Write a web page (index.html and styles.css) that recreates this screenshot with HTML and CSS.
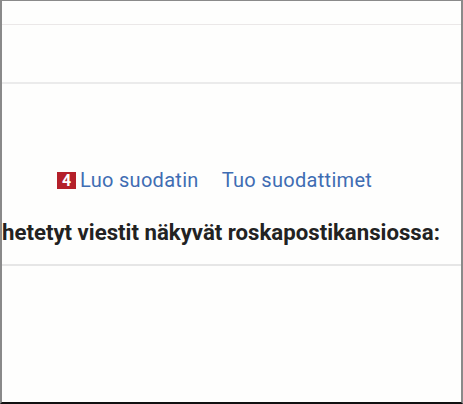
FILE: index.html
```html
<!DOCTYPE html>
<html lang="fi">
<head>
<meta charset="utf-8">
<link rel="stylesheet" href="styles.css">
</head>
<body>
<div class="frame">
  <div class="band band-top"></div>
  <div class="band band-mid"></div>
  <div class="content">
    <div class="actions">
      <span class="badge">4</span>
      <a class="link">Luo suodatin</a>
      <a class="link second">Tuo suodattimet</a>
    </div>
    <p class="note">hetetyt viestit näkyvät roskapostikansiossa:</p>
    <div class="rule"></div>
  </div>
</div>
</body>
</html>
```
FILE: styles.css
```css
html, body {
  margin: 0;
  padding: 0;
  background: #fefefd;
}
.frame {
  width: 463px;
  height: 404px;
  box-sizing: border-box;
  border-left: 2px solid #8a8a8a;
  border-right: 2px solid #8a8a8a;
  border-top: 1px solid #8a8a8a;
  border-bottom: 2px solid #111;
  background: #fefefd;
  overflow: hidden;
  font-family: Roboto, "Liberation Sans", Arial, sans-serif;
}
.band {
  border-bottom: 1px solid #ebe8e8;
}
.band-top {
  height: 23px;
}
.band-mid {
  height: 57px;
  border-bottom: 2px solid #ebebeb;
}
.content {
  padding-top: 86px;
}
.actions {
  display: flex;
  align-items: center;
  padding-left: 55px;
  height: 20px;
}
.badge {
  display: inline-flex;
  align-items: center;
  justify-content: center;
  width: 19px;
  height: 17px;
  background: #b4202a;
  color: #fff;
  font-weight: 700;
  font-size: 16px;
  margin-right: 4px;
}
.link {
  color: #3f6db3;
  font-size: 20px;
  line-height: 20px;
  letter-spacing: 0.3px;
}
.second {
  margin-left: 23px;
}
.note {
  margin: 29px 0 0 0;
  font-size: 22.2px;
  line-height: 26px;
  font-weight: 700;
  color: #222;
  white-space: nowrap;
}
.rule {
  margin-top: 19px;
  border-top: 2px solid #e6e6e6;
}
```
